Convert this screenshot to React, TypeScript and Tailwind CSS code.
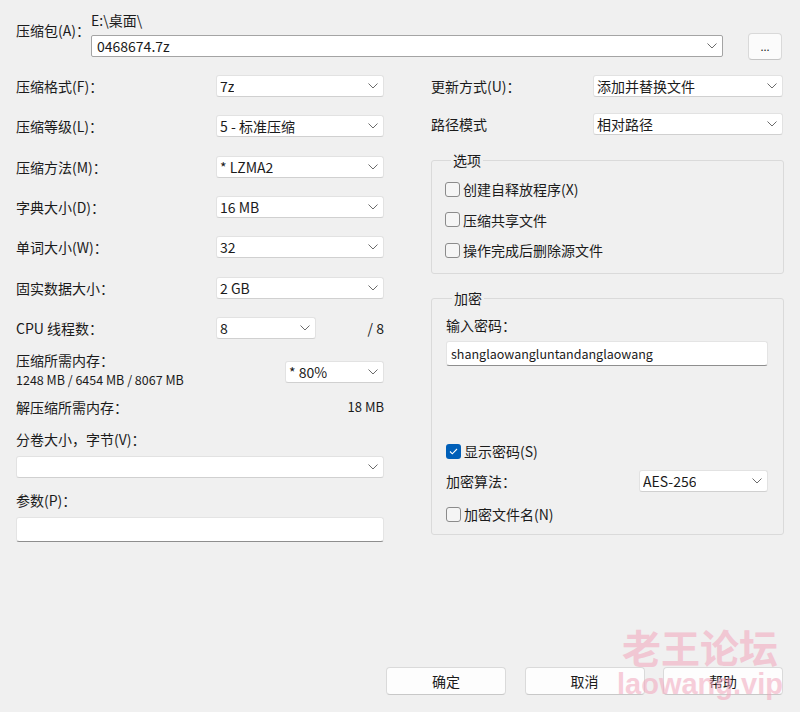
import clsx from "clsx";

const FONT = { fontFamily: '"Noto Sans CJK SC", "Noto Sans", sans-serif' };

function Chevron() {
  return (
    <svg width="10" height="6" viewBox="0 0 10 6" className="shrink-0">
      <polyline points="0.5,0.5 5,5 9.5,0.5" fill="none" stroke="#6b6b6b" strokeWidth="1" />
    </svg>
  );
}

function Select({ value, className }: { value?: string; className?: string }) {
  return (
    <div
      className={clsx(
        "flex h-[22px] items-center justify-between rounded-[3px] border border-[#e2e2e2] border-b-[#d0d0d0] bg-white pl-[3px] pr-[5px]",
        className
      )}
    >
      <span className="truncate">{value}</span>
      <Chevron />
    </div>
  );
}

function Check({ label, checked }: { label: string; checked?: boolean }) {
  return (
    <div className="flex h-[20px] items-center gap-[3px]">
      {checked ? (
        <span className="flex h-[15px] w-[15px] items-center justify-center rounded-[3px] bg-[#005fb8]">
          <svg width="9" height="7" viewBox="0 0 9 7">
            <polyline points="1,3.5 3.3,5.8 8,1" fill="none" stroke="white" strokeWidth="1.1" />
          </svg>
        </span>
      ) : (
        <span className="h-[15px] w-[15px] rounded-[3px] border border-[#8b8b8b] bg-[#f5f5f5]" />
      )}
      <span>{label}</span>
    </div>
  );
}

function Row({ label, value }: { label: string; value: string }) {
  return (
    <div className="flex h-[22px] items-center">
      <span className="w-[200px]">{label}</span>
      <Select value={value} className="w-[168px]" />
    </div>
  );
}

export default function App() {
  return (
    <div
      className="relative flex h-[712px] w-[800px] flex-col overflow-hidden bg-[#f0f0f0] text-[14px] leading-[20px] text-[#1b1b1b]"
      style={FONT}
    >
      {/* archive path */}
      <div className="flex items-start pl-4 pt-[12px]">
        <span className="mt-[8px] w-[75px]">压缩包(A)：</span>
        <div className="flex flex-col">
          <span className="leading-[16px]">E:\桌面\</span>
          <div className="mt-[7px] flex h-[22px] items-start">
            <div className="flex h-[22px] w-[632px] items-center justify-between rounded-[2px] border border-[#a4a4a4] bg-white pl-[5px] pr-[5px]">
              <span>0468674.7z</span>
              <Chevron />
            </div>
            <button
              type="button"
              className="ml-[25px] mt-[-2px] flex h-[27px] w-[34px] shrink-0 items-center justify-center rounded-[4px] border border-[#d9d9d9] border-b-[#c4c4c4] bg-[#fbfbfb] text-[11px] leading-none"
            >
              ...
            </button>
          </div>
        </div>
      </div>

      <div className="mt-[18px] flex pl-4">
        {/* left column */}
        <div className="flex w-[368px] flex-col">
          <div className="flex flex-col gap-[18.33px]">
            <Row label="压缩格式(F)：" value="7z" />
            <Row label="压缩等级(L)：" value="5 - 标准压缩" />
            <Row label="压缩方法(M)：" value="*  LZMA2" />
            <Row label="字典大小(D)：" value="16 MB" />
            <Row label="单词大小(W)：" value="32" />
            <Row label="固实数据大小：" value="2 GB" />
            <div className="flex h-[22px] items-center">
              <span className="w-[200px]">CPU 线程数：</span>
              <Select value="8" className="w-[100px]" />
              <span className="ml-auto">/ 8</span>
            </div>
          </div>

          <div className="mt-[11px] flex items-end justify-between">
            <div className="flex flex-col">
              <span>压缩所需内存：</span>
              <span className="text-[12.5px]">1248 MB / 6454 MB / 8067 MB</span>
            </div>
            <Select value="* 80%" className="mb-[7px] w-[99px]" />
          </div>

          <div className="mt-[7px] flex justify-between">
            <span>解压缩所需内存：</span>
            <span className="text-[13px]">18 MB</span>
          </div>

          <span className="mt-[12px]">分卷大小，字节(V)：</span>
          <Select className="mt-[7px] w-full" />

          <span className="mt-[12px]">参数(P)：</span>
          <div className="mt-[7px] h-[25px] w-full rounded-[3px] border border-[#e4e4e4] border-b-[#8e8e8e] bg-white" />
        </div>

        {/* right column */}
        <div className="ml-[47px] flex w-[353px] flex-col">
          <div className="flex h-[22px] items-center">
            <span className="w-[162px]">更新方式(U)：</span>
            <Select value="添加并替换文件" className="w-[190px]" />
          </div>
          <div className="mt-[16px] flex h-[22px] items-center">
            <span className="w-[162px]">路径模式</span>
            <Select value="相对路径" className="w-[190px]" />
          </div>

          <fieldset className="mt-[15px] rounded-[3px] border border-[#dadada] pb-[13px] pl-[13px]">
            <legend className="ml-[6px] px-[2px] leading-[20px]">选项</legend>
            <div className="mt-[9px] flex flex-col gap-[10.5px]">
              <Check label="创建自释放程序(X)" />
              <Check label="压缩共享文件" />
              <Check label="操作完成后删除源文件" />
            </div>
          </fieldset>

          <fieldset className="mt-[14px] rounded-[3px] border border-[#dadada] pb-[10px] pl-[14px] pr-[15px]">
            <legend className="ml-[6px] px-[2px] leading-[20px]">加密</legend>
            <span className="mt-[7px] block">输入密码：</span>
            <div className="mt-[6px] flex h-[25px] items-center rounded-[3px] border border-[#e4e4e4] border-b-[#8e8e8e] bg-white pl-[4px] text-[12.5px]">
              shanglaowangluntandanglaowang
            </div>
            <div className="mt-[75px]">
              <Check label="显示密码(S)" checked />
            </div>
            <div className="mt-[9px] flex h-[22px] items-center justify-between">
              <span>加密算法：</span>
              <Select value="AES-256" className="w-[129px]" />
            </div>
            <div className="mt-[12px]">
              <Check label="加密文件名(N)" />
            </div>
          </fieldset>
        </div>
      </div>

      {/* buttons */}
      <div className="mt-auto flex justify-end gap-[18.5px] pb-[17px] pr-[17px]">
        {["确定", "取消", "帮助"].map((t) => (
          <button
            key={t}
            type="button"
            className="flex h-[28px] w-[120px] items-center justify-center rounded-[4px] border border-[#dadada] border-b-[#c8c8c8] bg-[#fdfdfd]"
          >
            {t}
          </button>
        ))}
      </div>

      {/* watermark */}
      <div className="pointer-events-none absolute left-[617px] top-[622px] flex flex-col items-center text-[#f2a6bc] opacity-55">
        <span className="text-[39px] font-bold leading-[48px]">老王论坛</span>
        <span
          className="mt-[-3px] text-[29px] font-bold leading-[34px]"
          style={{ fontFamily: '"Liberation Sans", sans-serif' }}
        >
          laowang.vip
        </span>
      </div>
    </div>
  );
}
